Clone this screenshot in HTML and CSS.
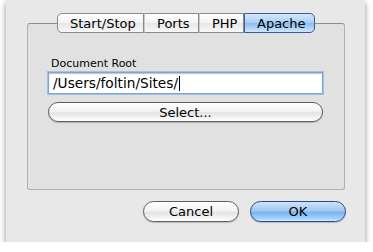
FILE: index.html
```html
<!DOCTYPE html>
<html lang="en">
<head>
    <meta charset="UTF-8">
    <title>Preferences</title>
    <link rel="stylesheet" href="styles.css">
</head>
<body>

<div class="window">
    <!-- Tab selector -->
    <div class="tabs">
        <span class="tab tab-first">Start/Stop</span>
        <span class="tab">Ports</span>
        <span class="tab">PHP</span>
        <span class="tab tab-last tab-active">Apache</span>
    </div>

    <!-- Apache pane -->
    <div class="group">
        <label class="field-label" for="docRoot">Document Root</label>
        <div class="field"><span class="field-text">/Users/foltin/Sites/</span><span class="caret"></span></div>
        <button class="aqua wide">Select...</button>
    </div>

    <div class="footer">
        <button class="aqua">Cancel</button>
        <button class="aqua default">OK</button>
    </div>
</div>

</body>
</html>
```

FILE: styles.css
```css
body {
    margin: 0;
    background: #ffffff;
    font-family: "DejaVu Sans", sans-serif;
    color: #000;
}

.window {
    margin-left: 6px;
    width: 359px;
    height: 242px;
    box-sizing: border-box;
    padding: 13px 20px 0 21px;
    background: #e8e8e8;
    box-shadow: 0 3px 6px rgba(0, 0, 0, 0.45);
}

/* Tabs */
.tabs {
    position: relative;
    z-index: 1;
    display: flex;
    justify-content: center;
    height: 20px;
}

.tab {
    box-sizing: border-box;
    height: 20px;
    line-height: 19px;
    padding: 0 12px;
    font-size: 13px;
    border: 1px solid #8a8a8a;
    border-left: 1px solid #c8c8c8;
    background: linear-gradient(#ffffff 0%, #f3f3f3 50%, #e6e6e6 51%, #f8f8f8 100%);
}

.tab-first {
    border-left: 1px solid #8a8a8a;
    border-radius: 5px 0 0 5px;
    width: 87px;
}

.tab:nth-child(2) { width: 55px; }
.tab:nth-child(3) { width: 45px; }

.tab-last {
    border-radius: 0 5px 5px 0;
    width: 71px;
}

.tab-active {
    border-color: #3a5a9a;
    background: linear-gradient(#d6e8fb 0%, #a9cdf5 50%, #8bbcf0 51%, #cfe6fd 100%);
}

/* Group box */
.group {
    margin-top: -10px;
    height: 167px;
    box-sizing: border-box;
    padding: 33px 21px 0 20px;
    border: 1px solid #b0b0b0;
    border-top-color: #8e8e8e;
    border-radius: 3px;
    background: #e1e1e1;
}

.field-label {
    display: block;
    font-size: 11px;
    margin-left: 3px;
    height: 13px;
    line-height: 13px;
}

.field {
    box-sizing: border-box;
    height: 22px;
    margin-top: 2px;
    padding: 0 4px;
    display: flex;
    align-items: center;
    background: #fff;
    border: 1px solid #7fa4d8;
    box-shadow: 0 0 0 1px #9fc0ea, inset 0 1px 1px rgba(0, 0, 0, 0.25);
    font-size: 13.7px;
}

.caret {
    display: inline-block;
    width: 1px;
    height: 15px;
    background: #000;
    margin-left: 1px;
}

/* Aqua buttons */
.aqua {
    box-sizing: border-box;
    height: 21px;
    padding: 0;
    font-family: "DejaVu Sans", sans-serif;
    font-size: 13px;
    color: #000;
    border: 1px solid #5e5e5e;
    border-radius: 11px;
    background: linear-gradient(#ffffff 0%, #f4f4f4 45%, #e3e3e3 55%, #f6f6f6 85%, #ffffff 100%);
    box-shadow: 0 1px 1px rgba(0, 0, 0, 0.2);
}

.wide {
    display: block;
    width: 100%;
    margin-top: 8px;
    height: 20px;
}

.footer {
    display: flex;
    justify-content: flex-end;
    gap: 11px;
    margin-top: 11px;
    margin-right: -1px;
}

.footer .aqua {
    width: 96px;
}

.default {
    border-color: #2c4a8a;
    background: linear-gradient(#cfe3fa 0%, #a3c8f3 45%, #7fb2ee 55%, #9cd0fb 85%, #d2ecff 100%);
}
```
